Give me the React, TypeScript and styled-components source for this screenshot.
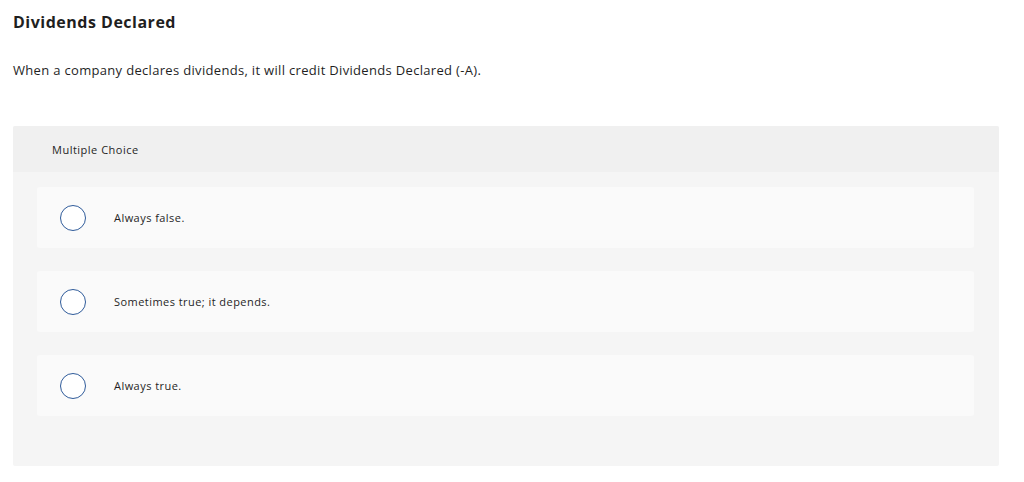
import React from "react";
import styled, { createGlobalStyle } from "styled-components";

const Global = createGlobalStyle`
  html, body { margin: 0; padding: 0; background: #ffffff; }
  body { font-family: "Open Sans", "Liberation Sans", sans-serif; color: #1a1a1a; }
`;

const Page = styled.div`
  padding: 10px 25px 16px 13px;
`;

const Title = styled.h2`
  margin: 0;
  font-size: 16px;
  font-weight: 700;
  line-height: 24px;
  color: #1f1f1f;
  letter-spacing: 0.5px;
`;

const Prompt = styled.p`
  margin: 27px 0 0;
  font-size: 13px;
  line-height: 18px;
  color: #1f1f1f;
  letter-spacing: 0.32px;
`;

const Panel = styled.section`
  margin-top: 47px;
  background: #f5f5f5;
  border-radius: 2px;
  padding-bottom: 50px;
`;

const PanelHeader = styled.div`
  background: #f0f0f0;
  height: 46px;
  display: flex;
  align-items: center;
  padding-left: 39px;
  font-size: 11px;
  color: #1f1f1f;
  letter-spacing: 0.5px;
  border-radius: 2px 2px 0 0;
`;

const Options = styled.div`
  display: flex;
  flex-direction: column;
  gap: 23px;
  padding: 15px 25px 0 24px;
`;

const Option = styled.label`
  display: flex;
  align-items: center;
  height: 61px;
  background: #fafafa;
  border-radius: 3px;
  padding-left: 23px;
  font-size: 11px;
  color: #1f1f1f;
  letter-spacing: 0.45px;
  cursor: pointer;
`;

const Radio = styled.span`
  width: 26px;
  height: 26px;
  border-radius: 50%;
  border: 1px solid #2f5b9a;
  background: #ffffff;
  box-sizing: border-box;
  flex: none;
  margin-right: 28px;
`;

const choices = ["Always false.", "Sometimes true; it depends.", "Always true."];

export default function App() {
  return (
    <>
      <Global />
      <Page>
        <Title>Dividends Declared</Title>
        <Prompt>When a company declares dividends, it will credit Dividends Declared (-A).</Prompt>
        <Panel>
          <PanelHeader>Multiple Choice</PanelHeader>
          <Options>
            {choices.map((c) => (
              <Option key={c}>
                <Radio />
                {c}
              </Option>
            ))}
          </Options>
        </Panel>
      </Page>
    </>
  );
}
